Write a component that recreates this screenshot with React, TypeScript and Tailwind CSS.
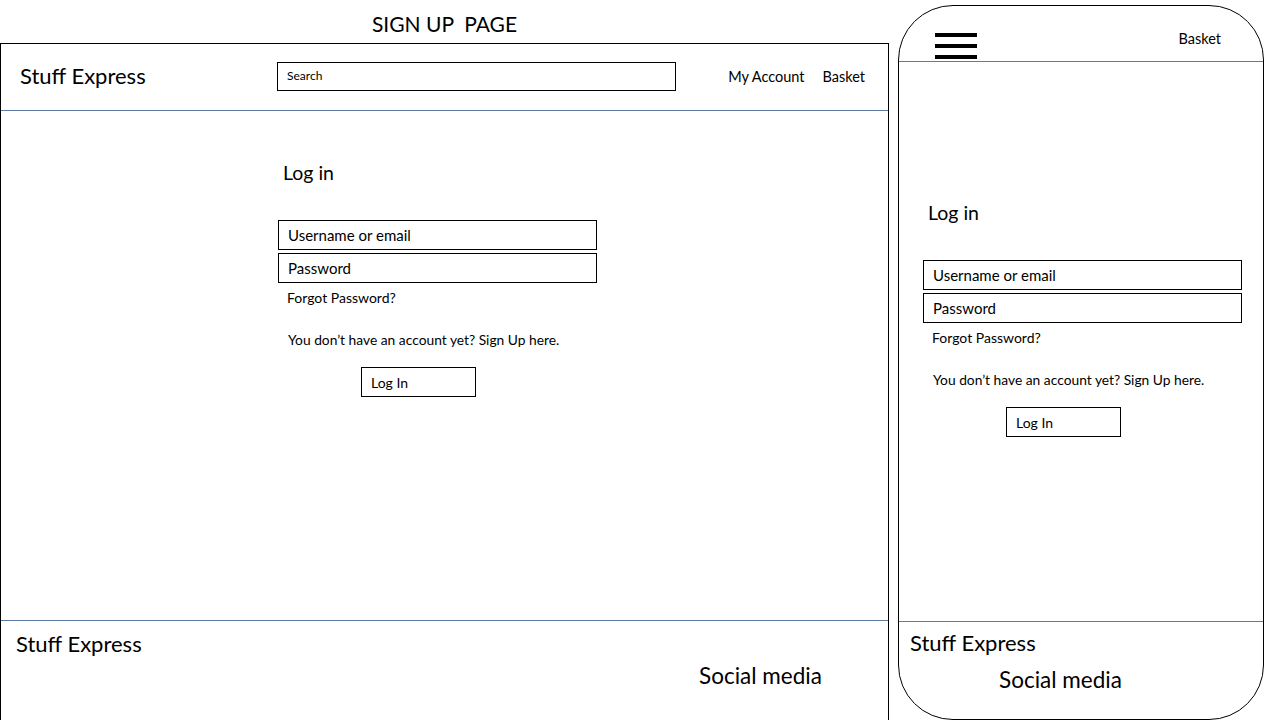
import React from 'react';

const font = { fontFamily: 'Lato, "Noto Sans", sans-serif' };

function LoginForm() {
  return (
    <div className="flex flex-col items-start text-black">
      <p className="ml-[5px] text-[19.5px] leading-[24px]">Log in</p>
      <div className="mt-[35px] flex h-[30px] w-[319px] items-center border border-black pl-[9px] text-[15px]">
        Username or email
      </div>
      <div className="mt-[3px] flex h-[30px] w-[319px] items-center border border-black pl-[9px] text-[15px]">
        Password
      </div>
      <p className="ml-[9px] mt-[6px] text-[14px] leading-[18px]">Forgot Password?</p>
      <p className="ml-[10px] mt-[24px] text-[13.8px] leading-[18px]">
        You don’t have an account yet? Sign Up here.
      </p>
      <button className="ml-[83px] mt-[18px] flex h-[30px] w-[115px] items-center border border-black pl-[9px] text-[14px]">
        Log In
      </button>
    </div>
  );
}

export default function App() {
  return (
    <div className="flex h-[720px] w-[1280px] items-start gap-[9px] overflow-hidden bg-white text-black" style={font}>
      {/* desktop */}
      <div className="flex w-[889px] flex-col">
        <div className="flex h-[43px] items-center justify-center pt-[4px]">
          <h1 className="whitespace-pre text-[21px]">SIGN UP  PAGE</h1>
        </div>
        <div className="flex h-[677px] flex-col border-l border-r border-t border-black">
          <header className="flex h-[67px] items-center border-b border-[#5b7ba3] pb-[3px]">
            <span className="ml-[19px] w-[257px] text-[22px]">Stuff Express</span>
            <div className="mt-[1px] flex h-[29px] w-[399px] items-center border border-black pl-[9px] text-[12px]">Search</div>
            <nav className="ml-auto mr-[23px] mt-[3px] flex gap-[18px] text-[14.5px]">
              <span>My Account</span>
              <span>Basket</span>
            </nav>
          </header>
          <main className="flex h-[509px] pl-[277px] pt-[50px]">
            <LoginForm />
          </main>
          <footer className="flex flex-1 flex-col border-t border-[#5b7ba3] px-[15px] pt-[10px]">
            <span className="text-[22px] leading-[26px]">Stuff Express</span>
            <span className="ml-[683px] mt-[6px] text-[22.5px] leading-[26px]">Social media</span>
          </footer>
        </div>
      </div>

      {/* mobile */}
      <div className="mt-[5px] flex h-[715px] w-[366px] flex-col overflow-hidden rounded-[55px] border border-black">
        <header className="flex h-[56px] shrink-0 items-start border-b border-[#5b7ba3]">
          <div className="ml-[36px] mt-[27px] flex w-[42px] flex-col gap-[7px]">
            <span className="block h-[4px] bg-black" />
            <span className="block h-[4px] bg-black" />
            <span className="block h-[4px] bg-black" />
          </div>
          <span className="ml-auto mr-[42px] mt-[23px] text-[14.5px] leading-[20px]">Basket</span>
        </header>
        <main className="flex h-[559px] shrink-0 pl-[24px] pt-[139px]">
          <LoginForm />
        </main>
        <footer className="flex flex-1 flex-col border-t border-[#5b7ba3] pl-[11px] pt-[8px]">
          <span className="text-[22px] leading-[26px]">Stuff Express</span>
          <span className="ml-[89px] mt-[11px] text-[22.5px] leading-[26px]">Social media</span>
        </footer>
      </div>
    </div>
  );
}
